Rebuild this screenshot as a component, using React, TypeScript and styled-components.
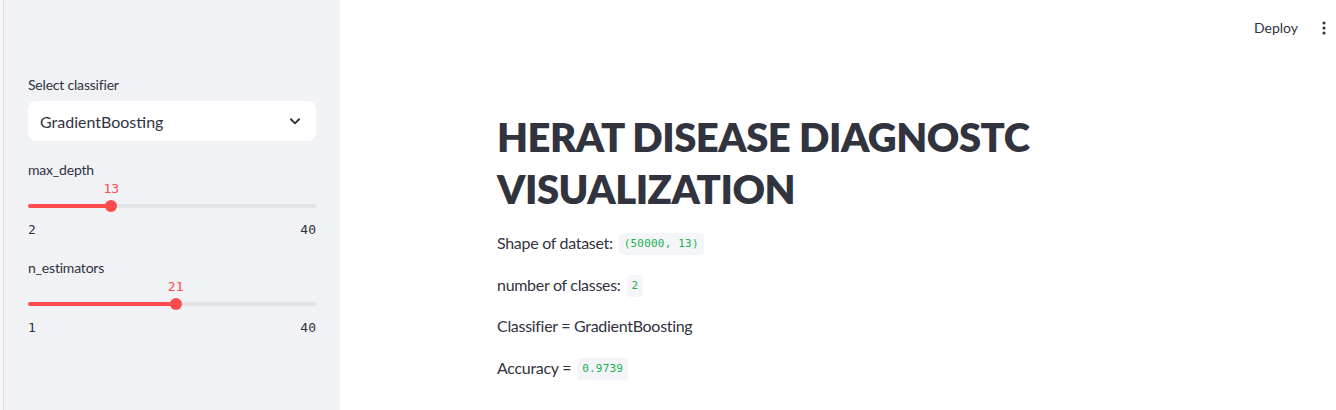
import React from "react";
import styled, { createGlobalStyle } from "styled-components";

const Global = createGlobalStyle`
  html, body { margin: 0; padding: 0; background: #ffffff; }
  body { font-family: Lato, "Noto Sans", sans-serif; color: #31333f; }
  * { box-sizing: border-box; }
`;

const Page = styled.div`
  display: flex;
  width: 1336px;
  height: 410px;
  overflow: hidden;
  background: #ffffff;
`;

const Sidebar = styled.aside`
  width: 340px;
  flex: none;
  height: 100%;
  background: #f0f2f6;
  border-left: 3px solid #f7f7f9;
  box-shadow: inset 1px 0 0 #d9dadf;
  padding: 75px 24px 0 25px;
  display: flex;
  flex-direction: column;
`;

const Label = styled.div<{ $gap?: number }>`
  font-size: 14px;
  line-height: 20px;
  height: 20px;
  margin-top: ${(p) => p.$gap ?? 0}px;
  color: #31333f;
  letter-spacing: -0.2px;
`;

const Select = styled.div`
  margin-top: 6px;
  height: 40px;
  background: #ffffff;
  border-radius: 8px;
  display: flex;
  align-items: center;
  justify-content: space-between;
  padding: 0 14px 0 12px;
  font-size: 16px;
  color: #31333f;
`;

const SliderWrap = styled.div`
  display: flex;
  flex-direction: column;
`;

const ValueRow = styled.div`
  position: relative;
  height: 18px;
`;

const ValueLabel = styled.span`
  position: absolute;
  top: 0;
  transform: translateX(-50%);
  font-family: "DejaVu Sans Mono", "Liberation Mono", monospace;
  font-size: 13px;
  line-height: 18px;
  color: #ff4b4b;
`;

const TrackArea = styled.div`
  position: relative;
  height: 16px;
  display: flex;
  align-items: center;
`;

const Track = styled.div`
  position: relative;
  width: 100%;
  height: 4px;
  border-radius: 2px;
  background: #e1e3e9;
`;

const Fill = styled.div`
  position: absolute;
  left: 0;
  top: 0;
  bottom: 0;
  border-radius: 2px;
  background: #ff4b4b;
`;

const Thumb = styled.div`
  position: absolute;
  top: 50%;
  width: 12px;
  height: 12px;
  border-radius: 50%;
  background: #ff4b4b;
  transform: translate(-50%, -50%);
`;

const Ticks = styled.div`
  margin-top: 5px;
  height: 20px;
  display: flex;
  justify-content: space-between;
  align-items: center;
  font-family: "DejaVu Sans Mono", "Liberation Mono", monospace;
  font-size: 13px;
  color: #31333f;
`;

const Main = styled.main`
  flex: 1;
  position: relative;
  padding-left: 157px;
`;

const Header = styled.div`
  position: absolute;
  top: 19px;
  right: 4px;
  display: flex;
  align-items: center;
  gap: 18px;
  font-size: 14px;
  color: #31333f;
`;

const Title = styled.h1`
  margin: 111px 0 0 0;
  font-size: 40px;
  line-height: 52px;
  font-weight: 800;
  color: #31333f;
  letter-spacing: -0.5px;
`;

const Para = styled.p`
  margin: 0;
  font-size: 16px;
  line-height: 25.6px;
  height: 41.5px;
  display: flex;
  align-items: flex-start;
  color: #31333f;
  letter-spacing: -0.3px;
  &:first-of-type { margin-top: 15px; }
`;

const Code = styled.code`
  font-family: "DejaVu Sans Mono", "Liberation Mono", monospace;
  font-size: 11px;
  letter-spacing: 0.2px;
  color: #21b04f;
  background: #f4f5f8;
  border-radius: 4px;
  padding: 1px 5px;
  margin-left: 6px;
  line-height: 20px;
  margin-top: 3px;
`;

type SliderProps = { value: number; min: number; max: number };

const Slider: React.FC<SliderProps> = ({ value, min, max }) => {
  const pct = ((value - min) / (max - min)) * 100;
  return (
    <SliderWrap>
      <ValueRow>
        <ValueLabel style={{ left: `${pct}%` }}>{value}</ValueLabel>
      </ValueRow>
      <TrackArea>
        <Track>
          <Fill style={{ width: `${pct}%` }} />
          <Thumb style={{ left: `${pct}%` }} />
        </Track>
      </TrackArea>
      <Ticks>
        <span>{min}</span>
        <span>{max}</span>
      </Ticks>
    </SliderWrap>
  );
};

const Chevron = () => (
  <svg width="14" height="14" viewBox="0 0 24 24" fill="none" stroke="#31333f" strokeWidth="3.2" strokeLinecap="round" strokeLinejoin="round">
    <path d="M5 9l7 7 7-7" />
  </svg>
);

const Kebab = () => (
  <svg width="16" height="16" viewBox="0 0 24 24" fill="#31333f">
    <circle cx="12" cy="4.5" r="2.3" />
    <circle cx="12" cy="12" r="2.3" />
    <circle cx="12" cy="19.5" r="2.3" />
  </svg>
);

export default function App() {
  return (
    <>
      <Global />
      <Page>
        <Sidebar>
          <Label>Select classifier</Label>
          <Select>
            <span>GradientBoosting</span>
            <Chevron />
          </Select>
          <Label $gap={19}>max_depth</Label>
          <Slider value={13} min={2} max={40} />
          <Label $gap={19}>n_estimators</Label>
          <Slider value={21} min={1} max={40} />
        </Sidebar>
        <Main>
          <Header>
            <span>Deploy</span>
            <Kebab />
          </Header>
          <Title>
            HERAT DISEASE DIAGNOSTC
            <br />
            VISUALIZATION
          </Title>
          <Para>
            Shape of dataset: <Code>(50000, 13)</Code>
          </Para>
          <Para>
            number of classes: <Code>2</Code>
          </Para>
          <Para>Classifier = GradientBoosting</Para>
          <Para>
            Accuracy = <Code>0.9739</Code>
          </Para>
        </Main>
      </Page>
    </>
  );
}
